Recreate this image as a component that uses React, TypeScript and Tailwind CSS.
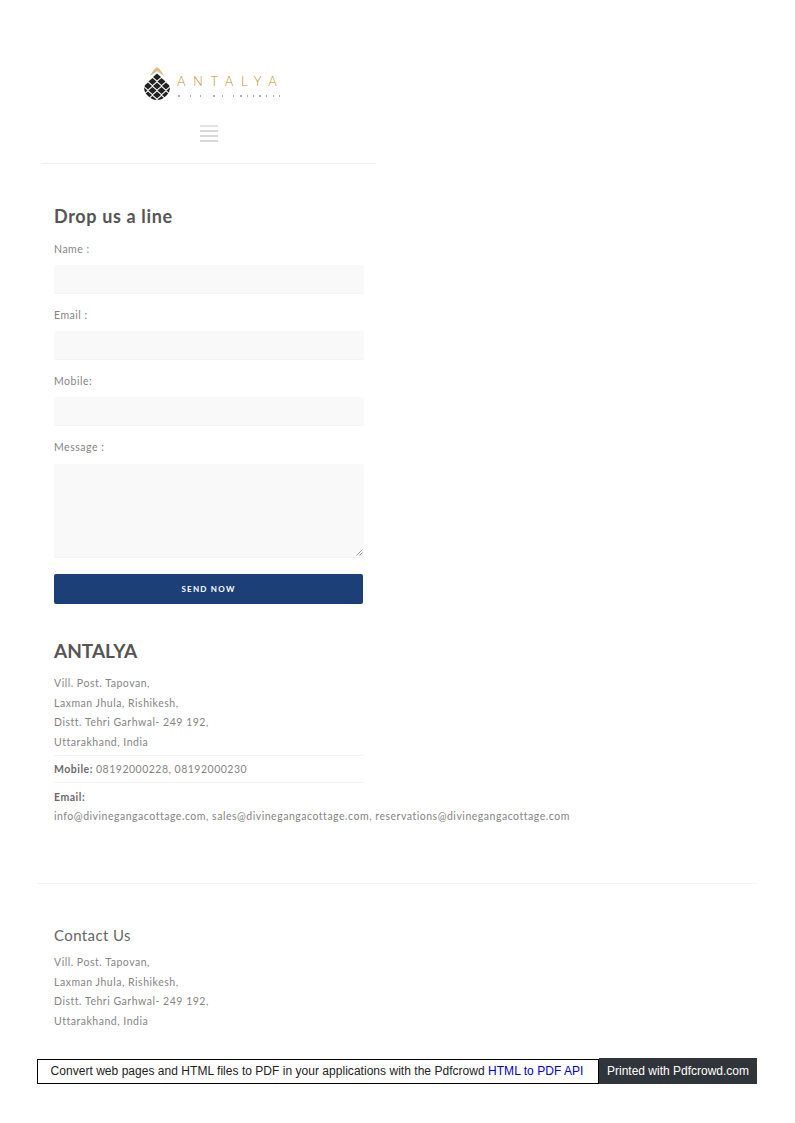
import React from 'react'

const address = ['Vill. Post. Tapovan,', 'Laxman Jhula, Rishikesh,', 'Distt. Tehri Garhwal- 249 192,', 'Uttarakhand, India']

// centres of the cone's scales
const scales = [
  [13, 10], [8.5, 14.5], [17.5, 14.5], [4, 19], [13, 19], [22, 19],
  [-0.5, 23.5], [8.5, 23.5], [17.5, 23.5], [26.5, 23.5], [4, 28], [13, 28], [22, 28], [8.5, 32.5], [17.5, 32.5],
]

function Logo() {
  return (
    <div className="flex items-start gap-[7px] h-[33px]">
      <svg width="26" height="33" viewBox="0 0 26 33">
        <path d="M6 9C8 5 10 2 13 0c3 2 5 5 7 9l-3-2-4-3-4 3z" fill="#d8bd85" />
        <clipPath id="cone">
          <path d="M13 5c5 1 10 6 12 12 1.500 4 1 8-2 11-3 3-6 5-10 5s-7-2-10-5c-3-3-3.500-7-2-11C3 11 8 6 13 5z" />
        </clipPath>
        <g clipPath="url(#cone)" fill="#222">
          {scales.map(([x, y]) => (
            <path key={`${x}-${y}`} d={`M${x - 4} ${y}L${x} ${y - 3.6}L${x + 4} ${y}L${x} ${y + 3.6}z`} />
          ))}
        </g>
      </svg>
      <div className="pt-[6px]">
        <div className="text-[13px] leading-[16px] tracking-[7.6px] font-light text-[#b8922f] whitespace-nowrap">ANTALYA</div>
        <svg width="104" height="4" viewBox="0 0 104 4" className="mt-[5px]">
          <path d="M1 2h2M13 2h1M23 2h1M36 2h2M45 2h1M56 2h1M63 2h2M70 2h1M76 2h1M82 2h2M89 2h1M96 2h1M102 2h1" stroke="#9a9a80" strokeWidth="1.500" />
        </svg>
      </div>
    </div>
  )
}

function Field({ label }: { label: string }) {
  return (
    <div className="flex flex-col mb-[11px]">
      <div className="text-[10.500px] leading-[20px] tracking-[0.52px] text-[#858585] mb-[6px]">{label}</div>
      <div className="h-[29px] w-[310px] rounded-[2px] bg-[#f9f9f9] border-b border-[#f3f3f3]"></div>
    </div>
  )
}

export default function App() {
  return (
    <div className="w-[795px] h-[1123px] bg-white font-['Lato',sans-serif] overflow-hidden">
      <div className="w-[334px] ml-[42px] pt-[67px] border-b border-[#f0f0f0] h-[164px]">
        <div className="pl-[102px]"><Logo /></div>
        <div className="mt-[25px] ml-[158px] w-[18px] flex flex-col gap-[3px]">
          <div className="h-[2px] bg-[#e2e2e2]"></div>
          <div className="h-[2px] bg-[#d8d8d8]"></div>
          <div className="h-[2px] bg-[#d8d8d8]"></div>
          <div className="h-[2px] bg-[#d8d8d8]"></div>
        </div>
      </div>

      <div className="pl-[54px] pt-[40px]">
        <h2 className="text-[18px] leading-[24px] font-bold tracking-[0.65px] text-[#555] mb-[11px]">Drop us a line</h2>
        <Field label="Name :" />
        <Field label="Email :" />
        <Field label="Mobile:" />
        <div className="text-[10.500px] leading-[20px] tracking-[0.52px] text-[#858585] mb-[7px]">Message :</div>
        <div className="relative h-[94px] w-[310px] rounded-[2px] bg-[#f9f9f9] border-b border-[#f3f3f3]">
          <svg width="7" height="7" viewBox="0 0 7 7" className="absolute right-[1px] bottom-[1px]">
            <path d="M0.500 6.500l6-6M3.500 6.500l3-3" stroke="#888" strokeWidth="0.800" />
          </svg>
        </div>
        <button className="block mt-[16px] h-[30px] w-[309px] rounded-[2px] bg-[#1c3f78] text-white text-[8px] font-bold tracking-[1.25px]">SEND NOW</button>

        <h2 className="mt-[34px] text-[19px] leading-[26px] font-bold text-[#555]">ANTALYA</h2>
        <div className="mt-[10px] w-[310px] text-[10.500px] leading-[19.500px] tracking-[0.52px] text-[#858585]">
          {address.map((line) => <div key={line}>{line}</div>)}
        </div>
        <div className="w-[310px] mt-[3px] border-t border-[#f3f3f3] border-b pt-[4px] pb-[3px] text-[10.500px] leading-[19px] tracking-[0.5px] text-[#858585]">
          <span className="font-bold text-[#6b6b6b]">Mobile:</span> 08192000228, 08192000230
        </div>
        <div className="mt-[5px] text-[10.500px] leading-[19px] tracking-[0.52px] text-[#858585]">
          <div className="font-bold text-[#6b6b6b]">Email:</div>
          <div>info@divinegangacottage.com, sales@divinegangacottage.com, reservations@divinegangacottage.com</div>
        </div>
      </div>

      <div className="ml-[37px] w-[720px] mt-[57px] border-t border-[#f3f3f3] pl-[17px] pt-[41px]">
        <h3 className="text-[15px] leading-[20px] tracking-[0.4px] text-[#666]">Contact Us</h3>
        <div className="mt-[8px] text-[10.500px] leading-[19.500px] tracking-[0.52px] text-[#858585]">
          {address.map((line) => <div key={line}>{line}</div>)}
        </div>
      </div>

      <div className="ml-[37px] mt-[27px] w-[720px] h-[26px] flex font-['Liberation_Sans',sans-serif] text-[12px]">
        <div className="w-[562px] my-[0.500px] border border-black bg-white flex items-center justify-center text-[#222] whitespace-nowrap tracking-[0.03px] pr-[2px]">
          <span>Convert web pages and HTML files to PDF in your applications with the Pdfcrowd <span className="text-[#0000cc]">HTML to PDF API</span></span>
        </div>
        <div className="flex-1 bg-[#30353b] text-white flex items-center justify-center whitespace-nowrap">Printed with Pdfcrowd.com</div>
      </div>
    </div>
  )
}
